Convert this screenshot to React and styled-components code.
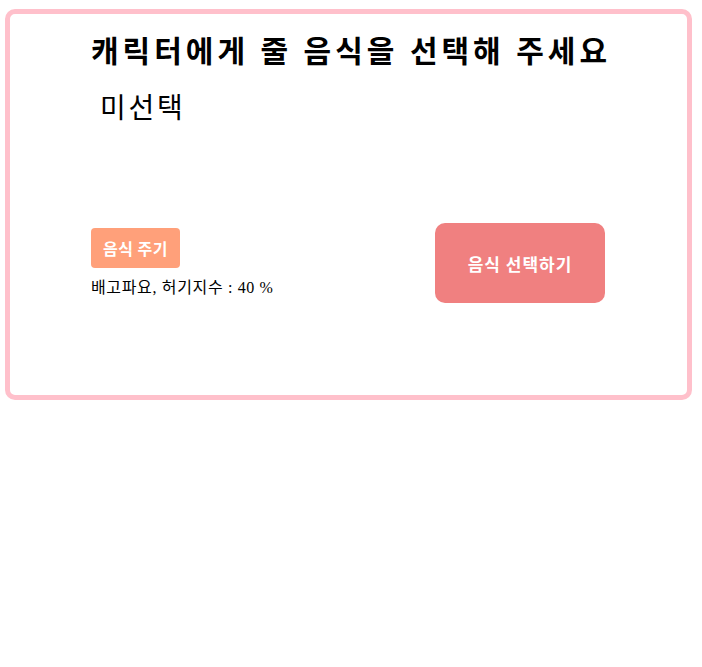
import React, { useState } from "react";
import styled, { createGlobalStyle } from "styled-components";

const GlobalStyle = createGlobalStyle`
  body {
    margin: 0;
    background: #fff;
    font-family: "Liberation Serif", "Noto Sans CJK KR", serif;
    color: #000;
  }
`;

const Card = styled.div`
  box-sizing: border-box;
  width: 687px;
  height: 391px;
  margin: 9px 0 0 5px;
  padding: 20px 82px 0 81px;
  border: 5px solid pink;
  border-radius: 10px;
  display: flex;
  flex-direction: column;
`;

const Title = styled.h1`
  margin: 0;
  font-size: 30px;
  line-height: 36px;
  letter-spacing: 4px;
  font-weight: bold;
  white-space: nowrap;
`;

const Selected = styled.div`
  margin: 21px 0 0 9px;
  font-size: 28px;
  line-height: 36px;
  letter-spacing: 2.8px;
`;

const Row = styled.div`
  margin-top: 96px;
  display: flex;
  justify-content: space-between;
  align-items: center;
`;

const LeftCol = styled.div`
  display: flex;
  flex-direction: column;
  align-items: flex-start;
  gap: 10px;
`;

const Button = styled.button`
  border: none;
  color: #fff;
  font-family: "Noto Sans CJK KR", "Noto Sans", sans-serif;
  font-weight: bold;
  cursor: pointer;
  background: ${(p) => (p.$big ? "lightcoral" : "lightsalmon")};
  border-radius: ${(p) => (p.$big ? "10px" : "4px")};
  font-size: ${(p) => (p.$big ? "17px" : "16px")};
  letter-spacing: ${(p) => (p.$big ? "1px" : "0.5px")};
  width: ${(p) => (p.$big ? "170px" : "auto")};
  height: ${(p) => (p.$big ? "80px" : "40px")};
  padding: ${(p) => (p.$big ? "0" : "0 12px")};
`;

const Status = styled.div`
  font-size: 16px;
  line-height: 20px;
  letter-spacing: 0.65px;
`;

function App() {
  const [food] = useState("미선택");
  const [hunger] = useState(40);

  return (
    <>
      <GlobalStyle />
      <Card>
        <Title>캐릭터에게 줄 음식을 선택해 주세요</Title>
        <Selected>{food}</Selected>
        <Row>
          <LeftCol>
            <Button>음식 주기</Button>
            <Status>배고파요, 허기지수 : {hunger} %</Status>
          </LeftCol>
          <Button $big>음식 선택하기</Button>
        </Row>
      </Card>
    </>
  );
}

export default App;
